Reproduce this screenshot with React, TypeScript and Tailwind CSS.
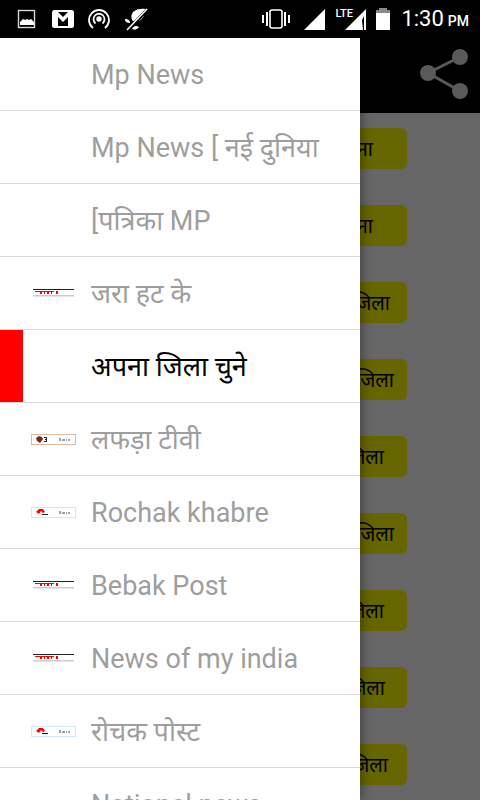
const buttons = [
  { label: 'मना', end: 'pr-[34px]' },
  { label: 'मना', end: 'pr-[34px]' },
  { label: 'खरगोन जिला', end: 'pr-[17px]' },
  { label: 'खरगोन जिला', end: 'pr-[13px]' },
  { label: 'खरगोन जिला', end: 'pr-[23px]' },
  { label: 'खरगोन जिला', end: 'pr-[13px]' },
  { label: 'खरगोन जिला', end: 'pr-[23px]' },
  { label: 'खरगोन जिला', end: 'pr-[22px]' },
  { label: 'खरगोन जिला', end: 'pr-[19px]' },
]

type Logo = 'none' | 'strip' | 'tan' | 'blue'

const menu: { label: string; logo: Logo; active?: boolean }[] = [
  { label: 'Mp News', logo: 'none' },
  { label: 'Mp News [ नई दुनिया', logo: 'none' },
  { label: '[पत्रिका MP', logo: 'none' },
  { label: 'जरा हट के', logo: 'strip' },
  { label: 'अपना जिला चुने', logo: 'none', active: true },
  { label: 'लफड़ा टीवी', logo: 'tan' },
  { label: 'Rochak khabre', logo: 'blue' },
  { label: 'Bebak Post', logo: 'strip' },
  { label: 'News of my india', logo: 'strip' },
  { label: 'रोचक पोस्ट', logo: 'blue' },
  { label: 'National news', logo: 'none' },
]

function MenuLogo({ kind }: { kind: Logo }) {
  if (kind === 'none') return null
  if (kind === 'strip') {
    return (
      <svg width="43" height="10" viewBox="0 0 43 10" className="block">
        <rect x="2" y="1" width="41" height="1" fill="#222" />
        <path d="M4 3h19v1h-2v2h-1V4h-2v2h-2V4h-2v2h-1V4h-2v2H9V4H4zM25 3h2v3h-2z" fill="#f00" />
        <rect x="2" y="7" width="41" height="1.5" fill="#ccc" />
      </svg>
    )
  }
  const border = kind === 'tan' ? 'border-[#dfb9a2]' : 'border-[#cfe9f5]'
  return (
    <div className={`flex h-[11px] w-[45px] items-center justify-between border ${border} bg-white pl-[4px] pr-[5px]`}>
      {kind === 'tan' ? (
        <svg width="12" height="7" viewBox="0 0 12 7">
          <path d="M0 2l3-2 3 1 1 2-3 4-3-2z" fill="#7a2a1a" />
          <path d="M8 1h3v5H8V5h2V4H9V3h1V2H8z" fill="#222" />
        </svg>
      ) : (
        <svg width="14" height="7" viewBox="0 0 14 7">
          <path d="M0 3l3-3h4l2 3-2 1-2-2-2 3z" fill="#f00" />
          <path d="M6 5h6v1H6z" fill="#222" />
        </svg>
      )}
      <svg width="11" height="3" viewBox="0 0 11 3">
        <path d="M0 0h2v3H0zM3 1h3v2H3zM7 1h1v2H7zM9 1h2v2H9z" fill="#9aa3ad" />
      </svg>
    </div>
  )
}

function StatusLeft() {
  return (
    <div className="flex items-center">
      <svg width="20" height="20" viewBox="0 0 20 20" className="ml-[17px] text-[#d8d8d8]">
        <rect x="1.5" y="1.5" width="16" height="17" fill="none" stroke="currentColor" strokeWidth="1.4" />
        <path d="M3 16v-3l3-3 2 1 2-1 2 1 2-1 3 3v3z" fill="#fff" />
      </svg>
      <svg width="22" height="18" viewBox="0 0 22 18" className="ml-[15px]">
        <rect x="0" y="0" width="22" height="18" rx="2.5" fill="#fff" />
        <path d="M6 2h10l-5 5zM6 7l5 5 5-5v9H6z" fill="#000" />
      </svg>
      <svg width="22" height="22" viewBox="0 0 22 22" fill="none" stroke="#fff" strokeWidth="1.8" className="ml-[14px]">
        <path d="M5 20a10 10 0 1 1 12 0" />
        <path d="M7.5 15.5a5.5 5.5 0 1 1 7 0" />
        <circle cx="11" cy="11" r="1.8" fill="#fff" />
      </svg>
      <svg width="24" height="24" viewBox="0 0 24 24" className="ml-[14px]">
        <path d="M9 5c3-3 8-4 13-3-1 5-3 10-7 12-3 1-5 1-7-1-1-3-1-5 1-8z" fill="#fff" />
        <path d="M1 12c3 0 5 1 5 4-3 0-5-1-5-4zM8 22c1-3 4-4 7-2-2 3-5 3-7 2z" fill="#fff" />
        <path d="M3 24L23 3" stroke="#000" strokeWidth="3.5" />
        <path d="M3 23L23 2" stroke="#fff" strokeWidth="1.5" />
      </svg>
    </div>
  )
}

function StatusRight() {
  return (
    <div className="flex items-center pr-[11px]">
      <svg width="28" height="20" viewBox="0 0 28 20" fill="#fff">
        <path d="M0 6h2v8H0zM4 3h2v14H4zM22 3h2v14h-2zM26 6h2v8h-2z" />
        <rect x="8" y="1" width="12" height="18" rx="2" fill="none" stroke="#fff" strokeWidth="1.6" />
      </svg>
      <svg width="21" height="21" viewBox="0 0 21 21" fill="#fff" className="ml-[14px]">
        <path d="M21 0v21H0z" />
      </svg>
      <div className="relative ml-[10px] h-[22px] w-[31px]">
        <span className="absolute left-0 top-[-1px] font-['Roboto',sans-serif] text-[11px] font-medium leading-[14px] text-white">LTE</span>
        <svg width="21" height="21" viewBox="0 0 21 21" fill="#fff" className="absolute bottom-0 right-0">
          <path d="M21 0v21H0z" />
          <path d="M19 7l-2 4 1 10h1z" fill="#000" />
        </svg>
      </div>
      <svg width="14" height="22" viewBox="0 0 14 22" className="ml-[10px]">
        <path d="M3 0h8v2h3v20H0V2h3z" fill="#8a8a8a" />
        <rect y="5" width="14" height="17" fill="#fff" />
      </svg>
      <span className="ml-[11px] font-['Roboto',sans-serif] text-[22px] leading-none text-white">1:30</span>
      <span className="ml-[4px] mt-[4px] font-['Roboto',sans-serif] text-[14px] font-medium leading-none text-white">PM</span>
    </div>
  )
}

export default function App() {
  return (
    <div className="relative flex h-[800px] w-[480px] flex-col overflow-hidden bg-[#666666] font-['Roboto','Noto_Sans',sans-serif]">
      <div className="z-20 flex h-[38px] shrink-0 items-center justify-between bg-black">
        <StatusLeft />
        <StatusRight />
      </div>

      {/* page under the drawer, dimmed */}
      <div className="flex h-[75px] shrink-0 items-start justify-end bg-black pr-[8px] pt-[8px]">
        <svg width="52" height="54" viewBox="0 0 52 54" className="text-[#5a5a5a]" fill="currentColor">
          <circle cx="40" cy="11" r="8" />
          <circle cx="8" cy="27" r="8" />
          <circle cx="40" cy="45" r="8" />
          <path d="M8 27L40 11M8 27l32 18" stroke="currentColor" strokeWidth="3" />
        </svg>
      </div>
      <div className="flex flex-col items-end gap-[36px] pr-[73px] pt-[15px]">
        {buttons.map((b, i) => (
          <div
            key={i}
            className={`flex h-[41px] w-[200px] items-center justify-end rounded-[6px] bg-[#666600] text-[20px] text-black ${b.end}`}
          >
            <span className="whitespace-nowrap">{b.label}</span>
          </div>
        ))}
      </div>

      {/* navigation drawer */}
      <div className="absolute bottom-0 left-0 top-[38px] z-10 flex w-[360px] flex-col overflow-hidden bg-white shadow-[2px_0_10px_rgba(0,0,0,0.35)]">
        {menu.map((m) => (
          <div key={m.label} className="flex h-[73px] shrink-0 items-center border-b border-[#d9d9d9]">
            <div className={`flex h-full w-[91px] shrink-0 items-center ${m.active ? '' : 'pl-[31px]'}`}>
              {m.active ? <div className="h-full w-[23px] bg-[#ff0000]" /> : <MenuLogo kind={m.logo} />}
            </div>
            <span className={`whitespace-nowrap pt-[3px] text-[27px] ${m.active ? 'text-black' : 'text-[#9e9e9e]'}`}>{m.label}</span>
          </div>
        ))}
      </div>
    </div>
  )
}
